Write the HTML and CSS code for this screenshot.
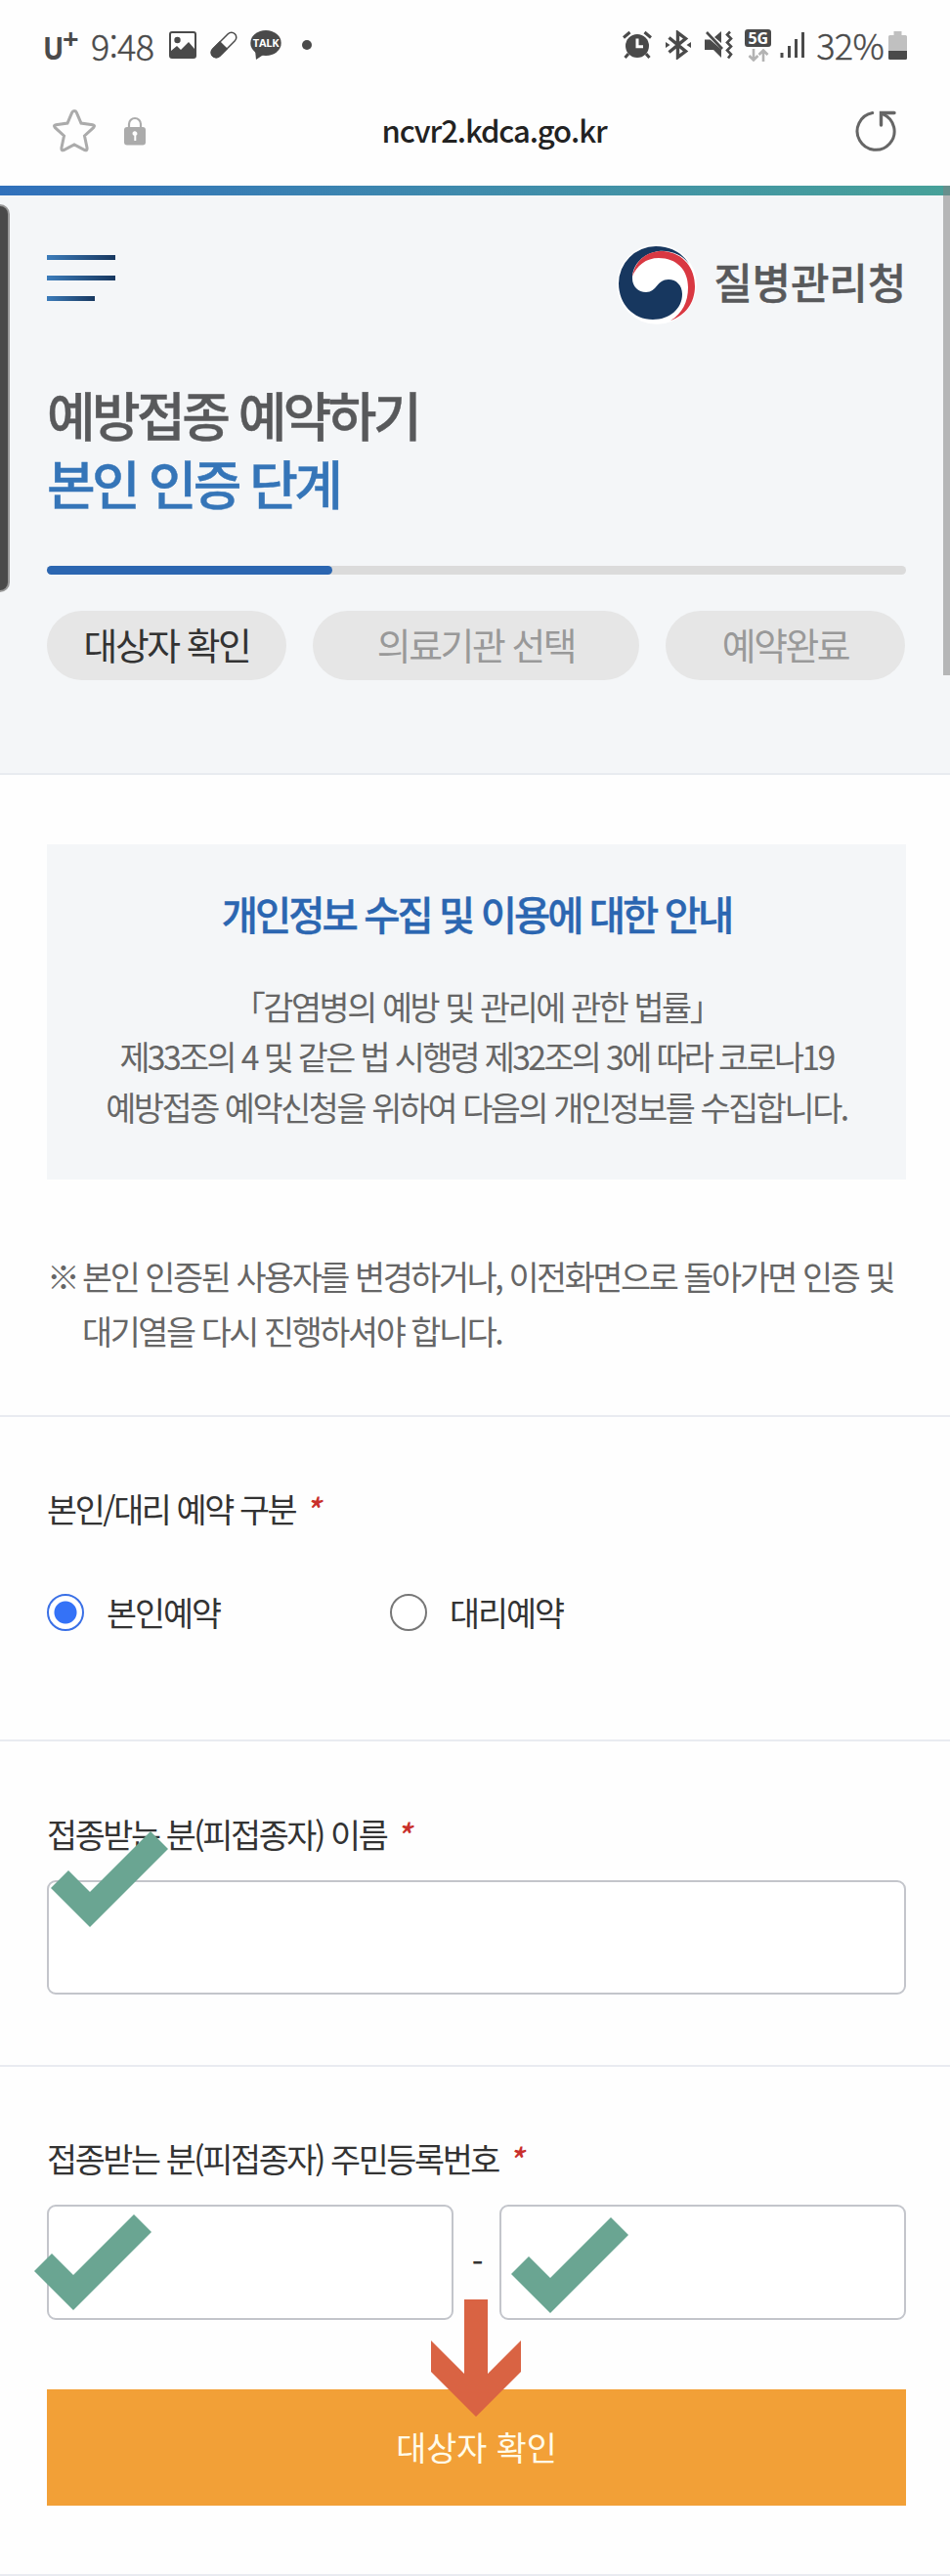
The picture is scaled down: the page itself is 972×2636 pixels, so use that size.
FILE: index.html
```
<!DOCTYPE html>
<html lang="ko">
<head>
    <meta charset="UTF-8">
    <meta name="viewport" content="width=device-width, initial-scale=1.0">
    <title>예방접종 예약하기</title>
    <link rel="stylesheet" href="styles.css">
</head>
<body>
    <div class="status-bar">
        <div class="status-left">
            <div class="carrier"><span class="carrier-u">U</span><span class="carrier-plus">+</span></div>
            <span class="clock">9:48</span>
            <svg class="icon-image" width="28" height="28" viewBox="0 0 28 28">
                <rect x="1" y="1" width="26" height="26" rx="2" fill="none" stroke="#4a4a4a" stroke-width="2"/>
                <circle cx="8.500" cy="9" r="3.200" fill="#4a4a4a"/>
                <path d="M2 20l6-5 4 4 8-8 6 7v8H2z" fill="#4a4a4a"/>
            </svg>
            <svg class="icon-pill" width="30" height="30" viewBox="0 0 30 30">
                <g transform="rotate(-45 15 15)">
                    <rect x="-1" y="10" width="32" height="10" rx="5" fill="none" stroke="#4a4a4a" stroke-width="1.500"/>
                    <path d="M15 9.300H4a5.700 5.700 0 0 0 0 11.400H15z" fill="#4a4a4a"/>
                </g>
            </svg>
            <span class="talk">
                <svg width="32" height="30" viewBox="0 0 32 30">
                    <ellipse cx="16" cy="13" rx="15.700" ry="13" fill="#4a4a4a"/>
                    <path d="M5 20l1 10 9-6z" fill="#4a4a4a"/>
                </svg>
                <span class="talk-text">TALK</span>
            </span>
            <span class="more-dot"></span>
        </div>
        <div class="status-right">
            <svg class="icon-alarm" width="30" height="30" viewBox="0 0 30 30">
                <circle cx="15" cy="16" r="12" fill="#4a4a4a"/>
                <path d="M1 7.500L7.500 2M29 7.500L22.500 2M6 24l-3.500 4M24 24l3.500 4" stroke="#4a4a4a" stroke-width="3"/>
                <path d="M15 8.500v8.200h6" fill="none" stroke="#fff" stroke-width="3"/>
            </svg>
            <svg class="icon-bluetooth" width="28" height="30" viewBox="0 0 28 30">
                <path d="M4.500 7.500l17 14L13.500 27.500V2.500l8 6-17 14" fill="none" stroke="#4a4a4a" stroke-width="3.400"/>
                <path d="M1 12l4.500 3L1 18zM27 12l-4.500 3 4.500 3z" fill="#4a4a4a"/>
            </svg>
            <svg class="icon-mute" width="30" height="30" viewBox="0 0 30 30">
                <path d="M1 9.500h5.500l11.500 10V28l-8-8H1zM11 7l7-6v12z" fill="#4a4a4a"/>
                <path d="M3 2l16 17" stroke="#4a4a4a" stroke-width="2.600"/>
                <path d="M27 1.500l-3 3 4 4-4 4 4 4-4 4 4 4-3 4" fill="none" stroke="#4a4a4a" stroke-width="2.600"/>
            </svg>
            <span class="network">
                <span class="network-label">5G</span>
                <svg width="22" height="13" viewBox="0 0 22 13">
                    <path d="M6 0v11M1.500 7L6 11.500 10.500 7M16 13V2M11.500 6L16 1.500 20.500 6" fill="none" stroke="#b3b3b3" stroke-width="2.600"/>
                </svg>
            </span>
            <svg class="icon-signal" width="26" height="28" viewBox="0 0 26 28">
                <path d="M2 22v5M9.500 15v12M16.500 8v19M23.500 1v26" stroke="#4a4a4a" stroke-width="3"/>
            </svg>
            <span class="battery-text">32%</span>
            <svg class="icon-battery" width="19" height="29" viewBox="0 0 19 29">
                <path d="M5.500 0h8v4H17.500q1.500 0 1.500 1.500V22H0V5.500Q0 4 1.500 4h4z" fill="#c0c0c0"/>
                <path d="M0 20h19v7.500q0 1.500-1.500 1.500h-16Q0 29 0 27.500z" fill="#4a4a4a"/>
            </svg>
        </div>
    </div>

    <div class="address-bar">
        <div class="address-icons">
            <svg class="icon-star" width="46" height="46" viewBox="0 0 46 46">
                <path d="M23 2.500q1.600 0 2.300 1.600l4.700 11 11.800 1.600q3 .600.800 3L33.500 28l2.600 12.500q.300 3-2.400 2L23 37l-10.700 5.500q-2.700 1-2.400-2L12.500 28 3.400 19.700q-2.200-2.400.800-3L16 15.100l4.700-11Q21.400 2.500 23 2.500z" fill="none" stroke="#ababab" stroke-width="3"/>
            </svg>
            <svg class="icon-lock" width="22" height="30" viewBox="0 0 22 30">
                <path d="M5 13V8a6 6 0 0 1 12 0v5" fill="none" stroke="#ababab" stroke-width="2.200"/>
                <rect x="0" y="11" width="22" height="18.500" rx="3" fill="#ababab"/>
                <path d="M8.500 18a2.500 2.500 0 1 1 3.800 1.800V25h-2v-5.200A2.500 2.500 0 0 1 8.500 18z" fill="#fff"/>
            </svg>
        </div>
        <div class="address-url">ncvr2.kdca.go.kr</div>
        <svg class="icon-reload" width="42" height="42" viewBox="0 0 42 42">
            <path d="M17.700 2.600A19 19 0 1 0 28.500 3.800L26.500 2.500" fill="none" stroke="#666" stroke-width="3" stroke-linecap="round"/>
            <path d="M40 2.500H26.500V15" fill="none" stroke="#666" stroke-width="3.400" stroke-linecap="round"/>
        </svg>
    </div>

    <div class="page">
        <div class="top-line"></div>
        <div class="edge-handle"></div>
        <div class="scrollbar"></div>

        <div class="header">
            <div class="header-row">
                <div class="menu">
                    <span class="menu-line"></span>
                    <span class="menu-line"></span>
                    <span class="menu-line short"></span>
                </div>
                <div class="logo">
                    <svg width="82" height="82" viewBox="0 0 82 82">
                        <circle cx="41" cy="41" r="40.800" fill="#fff"/>
                        <path d="M74 20C66 7 53 2 40 2A38 38 0 0 0 2 40C2 61 17 77 37 77C54 77 67 66 67 51C67 42 61 36 53 36C41 36 41 49 30 49C22 49 16 43 16 35C16 20 28 9 43 7C56 6 67 11 74 20z" fill="#17375f"/>
                        <path d="M16 33C19 15 33 6 48 7C69 9 80 25 80 43C80 60 70 73 55 78C67 71 73 59 73 44C73 26 61 14 43 14C30 14 20 22 16 33z" fill="#d93842"/>
                    </svg>
                    <span class="logo-text">질병관리청</span>
                </div>
            </div>
            <h1 class="title">예방접종 예약하기<br><span class="title-step">본인 인증 단계</span></h1>
            <div class="progress"><div class="progress-fill"></div></div>
            <div class="steps">
                <div class="step active">대상자 확인</div>
                <div class="step wide">의료기관 선택</div>
                <div class="step">예약완료</div>
            </div>
        </div>

        <div class="section notice">
            <div class="info-box">
                <h2>개인정보 수집 및 이용에 대한 안내</h2>
                <p>「감염병의 예방 및 관리에 관한 법률」<br><span class="law">제33조의 4 및 같은 법 시행령 제32조의 3에 따라 코로나19</span><br>예방접종 예약신청을 위하여 다음의 개인정보를 수집합니다.</p>
            </div>
            <div class="note">
                <span class="note-mark">※</span>
                <p>본인 인증된 사용자를 변경하거나, 이전화면으로 돌아가면 인증 및<br>대기열을 다시 진행하셔야 합니다.</p>
            </div>
        </div>

        <div class="section type">
            <div class="label">본인/대리 예약 구분<em>*</em></div>
            <div class="radios">
                <label class="radio"><input type="radio" name="type" checked>본인예약</label>
                <label class="radio"><input type="radio" name="type">대리예약</label>
            </div>
        </div>

        <div class="section name">
            <div class="label">접종받는 분(피접종자) 이름<em>*</em></div>
            <input class="field" type="text">
            <svg class="check check-name" viewBox="0 0 120 98">
                <path d="M0 58L18 40 40 62 102 0 120 18 40 98z"/>
            </svg>
        </div>

        <div class="section number">
            <div class="label">접종받는 분(피접종자) 주민등록번호<em>*</em></div>
            <div class="field-row">
                <input class="field" type="text">
                <span class="dash">-</span>
                <input class="field" type="text">
            </div>
            <button class="submit">대상자 확인</button>
            <svg class="check check-front" viewBox="0 0 120 98">
                <path d="M0 58L18 40 40 62 102 0 120 18 40 98z"/>
            </svg>
            <svg class="check check-back" viewBox="0 0 120 98">
                <path d="M0 58L18 40 40 62 102 0 120 18 40 98z"/>
            </svg>
            <svg class="arrow" viewBox="0 0 92 120">
                <path d="M34 0H58V76L92 42V74L46 120 0 74V42L34 76z"/>
            </svg>
        </div>
    </div>
</body>
</html>
```

FILE: styles.css
```
* {
    box-sizing: border-box;
}
body {
    margin: 0;
    background-color: #fefefe;
    font-family: "Noto Sans CJK KR", sans-serif;
    font-size: 33.75px;
    letter-spacing: -0.071em;
    color: #333;
}
h1, h2, p {
    margin: 0;
}
svg {
    display: block;
    flex: none;
}

/* phone status bar */
.status-bar {
    display: flex;
    justify-content: space-between;
    height: 92px;
    padding: 0 44px 0 44px;
    color: #4a4a4a;
    letter-spacing: 0;
}
.status-left, .status-right {
    display: flex;
    align-items: center;
    height: 92px;
}
.carrier {
    display: flex;
    align-items: flex-start;
    width: 49px;
    font-family: "Noto Sans", sans-serif;
    font-weight: 700;
}
.carrier-u {
    width: 20px;
    padding-top: 6px;
    font-size: 32px;
    line-height: 36px;
    transform: scaleX(0.88);
    transform-origin: left;
}
.carrier-plus {
    font-size: 29px;
    line-height: 28px;
}
.clock {
    width: 80px;
    font-size: 36px;
    font-weight: 300;
    line-height: 38px;
    letter-spacing: -0.6px;
    -webkit-text-stroke: 0.4px #4a4a4a;
}
.icon-pill {
    margin-left: 13px;
}
.talk {
    position: relative;
    margin-left: 12px;
}
.talk-text {
    position: absolute;
    left: 0;
    top: 4px;
    width: 32px;
    color: #fff;
    font-family: "Open Sans", sans-serif;
    font-size: 11px;
    font-weight: 700;
    line-height: 18px;
    letter-spacing: -0.3px;
    text-align: center;
}
.more-dot {
    width: 10px;
    height: 10px;
    margin-left: 21px;
    border-radius: 50%;
    background-color: #4a4a4a;
}
.icon-bluetooth {
    margin-left: 13px;
}
.icon-mute {
    margin-left: 12px;
}
.network {
    display: flex;
    flex-direction: column;
    align-items: center;
    gap: 2px;
    width: 27px;
    margin-left: 12px;
}
.network-label {
    width: 27px;
    height: 18px;
    border-radius: 3px;
    background-color: #4a4a4a;
    color: #fff;
    font-family: "Open Sans", sans-serif;
    font-size: 16px;
    font-weight: 700;
    line-height: 18px;
    text-align: center;
}
.icon-signal {
    margin-left: 9px;
}
.battery-text {
    margin-left: 11px;
    padding-bottom: 2px;
    font-size: 36px;
    font-weight: 300;
    line-height: 38px;
    letter-spacing: -0.7px;
    -webkit-text-stroke: 0.4px #4a4a4a;
}
.icon-battery {
    margin-left: 5px;
}

/* browser address bar */
.address-bar {
    display: grid;
    grid-template-columns: 1fr auto 1fr;
    align-items: center;
    height: 98px;
    padding: 0 55px 14px 53px;
}
.address-icons {
    display: flex;
    align-items: center;
    gap: 28px;
}
.address-url {
    padding: 0 0 3px 41px;
    color: #222;
    font-size: 31px;
    font-weight: 500;
    line-height: 40px;
    letter-spacing: -1.1px;
}
.icon-reload {
    justify-self: end;
}

/* page */
.page {
    position: relative;
}
.top-line {
    height: 10px;
    background: linear-gradient(to right, #3070bb, #3f8bac 50%, #47a199);
}
.edge-handle {
    position: absolute;
    left: 0;
    top: 19px;
    width: 10px;
    height: 397px;
    border: 2px solid #999;
    border-left: none;
    border-radius: 0 10px 10px 0;
    background-color: #4a4a4a;
}
.scrollbar {
    position: absolute;
    right: 0;
    top: 0;
    width: 7px;
    height: 501px;
    background-color: rgba(130, 130, 130, 0.55);
}
.header {
    height: 593px;
    padding: 50px 45px 0 48px;
    border-bottom: 2px solid #e8ebf0;
    background-color: #f4f6f8;
}
.header-row {
    display: flex;
    justify-content: space-between;
    align-items: flex-start;
}
.menu {
    display: flex;
    flex-direction: column;
    gap: 16px;
    padding-top: 11px;
}
.menu-line {
    width: 70px;
    height: 5px;
    background: linear-gradient(to right, #3c7cba, #17375f);
}
.menu-line.short {
    width: 49px;
}
.logo {
    display: flex;
    align-items: center;
    gap: 17px;
}
.logo-text {
    color: #58595b;
    font-size: 43px;
    font-weight: 500;
    line-height: 74px;
    padding-bottom: 8px;
    letter-spacing: -0.2px;
    -webkit-text-stroke: 0.4px #58595b;
}
.title {
    margin-top: 57px;
    color: #58595b;
    font-size: 54px;
    font-weight: 500;
    line-height: 70px;
    letter-spacing: -0.067em;
    -webkit-text-stroke: 0.4px #58595b;
}
.title-step {
    color: #3575b8;
    -webkit-text-stroke: 0.4px #3575b8;
}
.progress {
    width: 879px;
    height: 9px;
    margin-top: 50px;
    border-radius: 5px;
    background-color: #dbdbdb;
}
.progress-fill {
    width: 292px;
    height: 9px;
    border-radius: 5px;
    background-color: #2b66b1;
}
.steps {
    display: flex;
    gap: 27px;
    width: 879px;
    margin-top: 37px;
}
.step {
    width: 245px;
    height: 71px;
    border-radius: 36px;
    background-color: #e6e6e6;
    color: #999;
    font-size: 37.8px;
    line-height: 68px;
    letter-spacing: -0.064em;
    text-align: center;
}
.step.wide {
    width: 334px;
}
.step.active {
    color: #333;
}

.section {
    position: relative;
    padding: 69px 45px 0 48px;
    border-bottom: 2px solid #e9ebf1;
}
.notice {
    height: 657px;
    padding-top: 71px;
    color: #666;
}
.info-box {
    height: 343px;
    padding-top: 41px;
    background-color: #f4f6f8;
    text-align: center;
}
.info-box h2 {
    margin-bottom: 39px;
    color: #2b66b1;
    font-size: 40.5px;
    font-weight: 500;
    line-height: 60px;
    letter-spacing: -0.074em;
    -webkit-text-stroke: 0.4px #2b66b1;
}
.info-box p {
    line-height: 51.3px;
}
.law {
    letter-spacing: -0.078em;
}
.note {
    display: flex;
    margin-top: 71px;
    line-height: 56px;
    white-space: nowrap;
}
.note-mark {
    width: 36px;
}

.label {
    line-height: 50px;
    white-space: nowrap;
}
.label em {
    margin-left: 9px;
    color: #c9302c;
    font-weight: 500;
    font-size: 33px;
    vertical-align: 0;
    line-height: 1;
}
.type {
    height: 332px;
}
.radios {
    display: grid;
    grid-template-columns: 351px 351px;
    margin-top: 56px;
}
.radio {
    display: flex;
    align-items: center;
    gap: 23px;
    line-height: 50px;
    letter-spacing: -0.06em;
}
.radio input {
    appearance: none;
    width: 38px;
    height: 38px;
    margin: 0;
    border: 2px solid #777;
    border-radius: 50%;
    background-color: #fff;
}
.radio input:checked {
    border-color: #3a70e6;
    background: radial-gradient(circle, #3472f7 11px, #fff 12px);
}

.name {
    height: 333px;
    padding-top: 70px;
}
.field {
    display: block;
    width: 879px;
    height: 117px;
    margin: 22px 0 0;
    padding: 0 24px;
    border: 2px solid #c3c5cb;
    border-radius: 9px;
    background-color: #fff;
    font: inherit;
}
.number {
    height: 521px;
}
.field-row {
    display: flex;
    align-items: center;
    width: 879px;
    margin-top: 22px;
}
.field-row .field {
    flex: 1;
    min-width: 0;
    height: 118px;
    margin: 0;
}
.dash {
    width: 47px;
    padding-bottom: 3px;
    text-align: center;
}
.submit {
    display: block;
    width: 879px;
    height: 119px;
    margin-top: 71px;
    padding: 0 0 2px;
    border: none;
    background-color: #f2a037;
    color: #fffbe9;
    font-family: inherit;
    font-size: 33.75px;
    letter-spacing: 0;
}

/* marks lying over the form */
.check {
    position: absolute;
    width: 120px;
    height: 98px;
    fill: #6aa592;
}
.check-name {
    left: 52px;
    top: 92px;
}
.check-front {
    left: 35px;
    top: 151px;
}
.check-back {
    left: 523px;
    top: 154px;
}
.arrow {
    position: absolute;
    left: 441px;
    top: 238px;
    width: 92px;
    height: 120px;
    fill: #d96343;
}
```
